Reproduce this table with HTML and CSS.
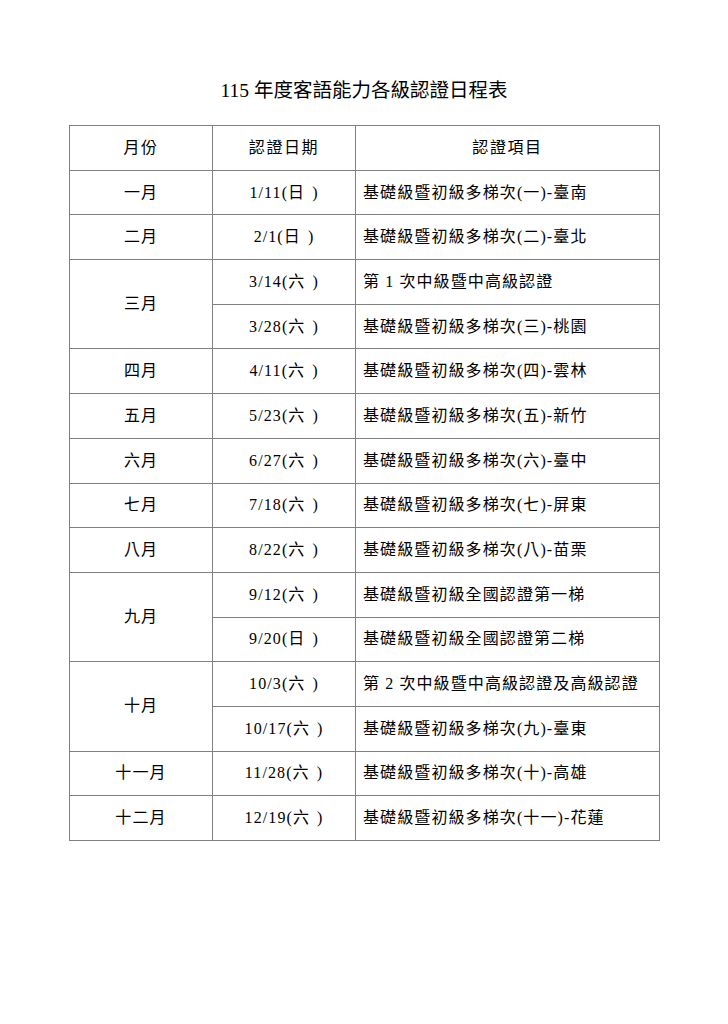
FILE: index.html
```html
<!DOCTYPE html>
<html lang="zh-Hant">
<head>
<meta charset="utf-8">
<title>115 年度客語能力各級認證日程表</title>
<link rel="stylesheet" href="styles.css">
</head>
<body>
<div class="page">
  <h1 class="title">115 年度客語能力各級認證日程表</h1>
  <table class="schedule">
    <colgroup>
      <col class="c-month">
      <col class="c-date">
      <col class="c-item">
    </colgroup>
    <thead>
      <tr>
        <th>月份</th>
        <th>認證日期</th>
        <th>認證項目</th>
      </tr>
    </thead>
    <tbody>
      <tr><td class="month">一月</td><td class="date">1/11(<span class="wd">日</span>)</td><td class="item">基礎級暨初級多梯次(一)-臺南</td></tr>
      <tr><td class="month">二月</td><td class="date">2/1(<span class="wd">日</span>)</td><td class="item">基礎級暨初級多梯次(二)-臺北</td></tr>
      <tr><td class="month" rowspan="2">三月</td><td class="date">3/14(<span class="wd">六</span>)</td><td class="item">第 1 次中級暨中高級認證</td></tr>
      <tr><td class="date">3/28(<span class="wd">六</span>)</td><td class="item">基礎級暨初級多梯次(三)-桃園</td></tr>
      <tr><td class="month">四月</td><td class="date">4/11(<span class="wd">六</span>)</td><td class="item">基礎級暨初級多梯次(四)-雲林</td></tr>
      <tr><td class="month">五月</td><td class="date">5/23(<span class="wd">六</span>)</td><td class="item">基礎級暨初級多梯次(五)-新竹</td></tr>
      <tr><td class="month">六月</td><td class="date">6/27(<span class="wd">六</span>)</td><td class="item">基礎級暨初級多梯次(六)-臺中</td></tr>
      <tr><td class="month">七月</td><td class="date">7/18(<span class="wd">六</span>)</td><td class="item">基礎級暨初級多梯次(七)-屏東</td></tr>
      <tr><td class="month">八月</td><td class="date">8/22(<span class="wd">六</span>)</td><td class="item">基礎級暨初級多梯次(八)-苗栗</td></tr>
      <tr><td class="month" rowspan="2">九月</td><td class="date">9/12(<span class="wd">六</span>)</td><td class="item">基礎級暨初級全國認證第一梯</td></tr>
      <tr><td class="date">9/20(<span class="wd">日</span>)</td><td class="item">基礎級暨初級全國認證第二梯</td></tr>
      <tr><td class="month" rowspan="2">十月</td><td class="date">10/3(<span class="wd">六</span>)</td><td class="item">第 2 次中級暨中高級認證及高級認證</td></tr>
      <tr><td class="date">10/17(<span class="wd">六</span>)</td><td class="item">基礎級暨初級多梯次(九)-臺東</td></tr>
      <tr><td class="month">十一月</td><td class="date">11/28(<span class="wd">六</span>)</td><td class="item">基礎級暨初級多梯次(十)-高雄</td></tr>
      <tr><td class="month">十二月</td><td class="date">12/19(<span class="wd">六</span>)</td><td class="item">基礎級暨初級多梯次(十一)-花蓮</td></tr>
    </tbody>
  </table>
</div>
</body>
</html>
```

FILE: styles.css
```css
html, body {
  margin: 0;
  padding: 0;
  background: #ffffff;
}

body {
  font-family: "Liberation Serif", "Noto Sans CJK TC", serif;
  color: #000000;
}

.page {
  padding-top: 78px;
  padding-left: 69px;
  width: 590px;
}

.title {
  margin: 0 0 21px 0;
  font-size: 19.5px;
  font-weight: normal;
  line-height: 26px;
  text-align: center;
}

.schedule {
  border-collapse: collapse;
  width: 590px;
  table-layout: fixed;
  font-size: 16px;
  letter-spacing: 1.1px;
}

.c-month { width: 143px; }
.c-date { width: 143px; }
.c-item { width: 304px; }

.schedule th,
.schedule td {
  border: 1px solid #808080;
  height: 43.7px;
  padding: 0;
  font-weight: normal;
  vertical-align: middle;
  line-height: 20px;
  white-space: nowrap;
}

.schedule th,
.month,
.date {
  text-align: center;
}

.schedule th {
  letter-spacing: 1.6px;
}

.item {
  text-align: left;
  padding-left: 7px !important;
}

.wd {
  margin-right: 7px;
}
```
